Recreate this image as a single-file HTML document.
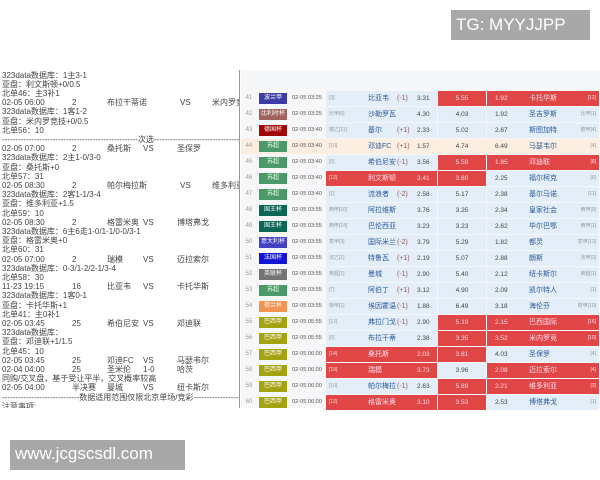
<!DOCTYPE html>
<html><head><meta charset="utf-8"><style>
*{margin:0;padding:0;box-sizing:border-box}
body{width:600px;height:480px;background:#fff;position:relative;overflow:hidden;font-family:"Liberation Sans","Noto Sans CJK SC",sans-serif}
.tg{position:absolute;left:451px;top:10px;width:139px;height:30px;background:#a8a8a8;color:#fff;font-size:17px;line-height:30px;padding-left:5px}
.www{position:absolute;left:10px;top:440px;width:175px;height:30px;background:#a8a8a8;color:#fff;font-size:17px;line-height:28px;padding-left:5px}
.lp{position:absolute;left:0;top:70px;width:240px;height:338px;overflow:hidden;border-right:1px solid #999;font-size:8px;color:#444}
.l{position:absolute;left:2px;white-space:nowrap;height:9px;line-height:9px}
.l span{position:absolute;white-space:nowrap}
.rp{position:absolute;left:241px;top:70px;width:359px;height:338px;background:#f6f7f9}
.r{position:absolute;left:0;height:15px;width:358px;font-size:6.5px;color:#444;line-height:15px}
.r div{position:absolute;top:0;height:15px;white-space:nowrap}
.ix{left:2px;width:12px;text-align:center;color:#999;font-size:6px}
.bd{left:18px!important;top:2px!important;width:28px;height:11px!important;line-height:11px;color:#fff;text-align:center;font-size:6px}
.tm{left:51px;color:#555;font-size:5.6px}
.hc{left:85px;width:111px;background:#e3eef9}
.dc{left:197px;width:48px;background:#e3eef9;text-align:center}
.ac{left:246px;width:112px;background:#e3eef9}
.red{background:#e04646!important;color:#fde!important}
.red *{color:#fde!important}
.hc i,.ac i{position:absolute;font-style:normal;white-space:nowrap}
.rk{color:#999;font-size:5px}
.nm{color:#2a5a9a;font-size:7px}
.hp{color:#955;font-size:7px}
</style></head><body>
<div class="tg">TG: MYYJJPP</div>
<div class="www">www.jcgscsdl.com</div>
<div class="lp">
<div class="l" style="top:1px">323data数据库：1主3-1</div>
<div class="l" style="top:10px">亚盘：利文斯顿+0/0.5</div>
<div class="l" style="top:19px">北单46：主3补1</div>
<div class="l" style="top:28px">02-05 06:00<span style="left:70px">2</span><span style="left:105px">布拉干蒂诺</span><span style="left:178px">VS</span><span style="left:210px">米内罗竞</span></div>
<div class="l" style="top:37px">323data数据库：1客1-2</div>
<div class="l" style="top:47px">亚盘：米内罗竞技+0/0.5</div>
<div class="l" style="top:56px">北单56：10</div>
<div class="l" style="top:65px">---------------------------------------------------次选--------------------------------------------</div>
<div class="l" style="top:74px">02-05 07:00<span style="left:70px">2</span><span style="left:105px">桑托斯</span><span style="left:141px">VS</span><span style="left:175px">圣保罗</span></div>
<div class="l" style="top:83px">323data数据库：2主1-0/3-0</div>
<div class="l" style="top:93px">亚盘：桑托斯+0</div>
<div class="l" style="top:102px">北单57：31</div>
<div class="l" style="top:111px">02-05 08:30<span style="left:70px">2</span><span style="left:105px">帕尔梅拉斯</span><span style="left:178px">VS</span><span style="left:210px">维多利亚</span></div>
<div class="l" style="top:120px">323data数据库：2客1-1/3-4</div>
<div class="l" style="top:129px">亚盘：维多利亚+1.5</div>
<div class="l" style="top:139px">北单59：10</div>
<div class="l" style="top:148px">02-05 08:30<span style="left:70px">2</span><span style="left:105px">格雷米奥</span><span style="left:141px">VS</span><span style="left:175px">博塔弗戈</span></div>
<div class="l" style="top:157px">323data数据库：6主6走1-0/1-1/0-0/3-1</div>
<div class="l" style="top:166px">亚盘：格雷米奥+0</div>
<div class="l" style="top:175px">北单60：31</div>
<div class="l" style="top:185px">02-05 07:00<span style="left:70px">2</span><span style="left:105px">瑞模</span><span style="left:141px">VS</span><span style="left:175px">迈拉索尔</span></div>
<div class="l" style="top:194px">323data数据库：0-3/1-2/2-1/3-4</div>
<div class="l" style="top:203px">北单58：30</div>
<div class="l" style="top:212px">11-23 19:15<span style="left:70px">16</span><span style="left:105px">比亚韦</span><span style="left:141px">VS</span><span style="left:175px">卡托华斯</span></div>
<div class="l" style="top:221px">323data数据库：1客0-1</div>
<div class="l" style="top:231px">亚盘：卡托华斯+1</div>
<div class="l" style="top:240px">北单41：主0补1</div>
<div class="l" style="top:249px">02-05 03:45<span style="left:70px">25</span><span style="left:105px">希伯尼安</span><span style="left:141px">VS</span><span style="left:175px">邓迪联</span></div>
<div class="l" style="top:258px">323data数据库：</div>
<div class="l" style="top:267px">亚盘：邓迪联+1/1.5</div>
<div class="l" style="top:277px">北单45：10</div>
<div class="l" style="top:286px">02-05 03:45<span style="left:70px">25</span><span style="left:105px">邓迪FC</span><span style="left:141px">VS</span><span style="left:175px">马瑟韦尔</span></div>
<div class="l" style="top:295px">02-04 04:00<span style="left:70px">25</span><span style="left:105px">圣米伦</span><span style="left:141px">1-0</span><span style="left:175px">哈茨</span></div>
<div class="l" style="top:304px">同购/交叉盘，基于受让平半，交叉概率较高</div>
<div class="l" style="top:313px">02-05 04:00<span style="left:70px">半决赛</span><span style="left:105px">曼城</span><span style="left:141px">VS</span><span style="left:175px">纽卡斯尔</span></div>
<div class="l" style="top:323px">-----------------------------数据适用范围仅限北京单场/竞彩---------------------------</div>
<div class="l" style="top:332px">注意事项:</div>
</div>
<div class="rp">
<div class="r" style="top:21px"><div class="ix">41</div><div class="bd" style="background:#3c3ca6">波兰甲</div><div class="tm">02-05 03:25</div><div class="hc"><i class="rk" style="left:3px">[3]</i><i class="nm" style="left:42px">比亚韦</i><i class="hp" style="left:71px">(-1)</i><i style="left:91px">3.31</i></div><div class="dc red">5.55</div><div class="ac red"><i style="left:8px">1.92</i><i class="nm" style="left:42px">卡托华斯</i><i class="rk" style="right:3px">[12]</i></div></div>
<div class="r" style="top:37px"><div class="ix">42</div><div class="bd" style="background:#a0625a">比利时杯</div><div class="tm">02-05 03:25</div><div class="hc"><i class="rk" style="left:3px">比甲[6]</i><i class="nm" style="left:42px">沙勒罗瓦</i><i style="left:91px">4.30</i></div><div class="dc">4.03</div><div class="ac"><i style="left:8px">1.92</i><i class="nm" style="left:42px">圣吉罗斯</i><i class="rk" style="right:3px">比甲[1]</i></div></div>
<div class="r" style="top:53px"><div class="ix">43</div><div class="bd" style="background:#a00808">德国杯</div><div class="tm">02-05 03:40</div><div class="hc"><i class="rk" style="left:3px">德乙[11]</i><i class="nm" style="left:42px">基尔</i><i class="hp" style="left:71px">(+1)</i><i style="left:91px">2.33</i></div><div class="dc">5.02</div><div class="ac"><i style="left:8px">2.67</i><i class="nm" style="left:42px">斯图加特</i><i class="rk" style="right:3px">德甲[4]</i></div></div>
<div class="r" style="top:69px;background:#fcefe2"><div class="ix">44</div><div class="bd" style="background:#4a9a68">苏超</div><div class="tm">02-05 03:40</div><div class="hc" style="background:#fcefe2"><i class="rk" style="left:3px">[10]</i><i class="nm" style="left:42px">邓迪FC</i><i class="hp" style="left:71px">(+1)</i><i style="left:91px">1.57</i></div><div class="dc" style="background:#fcefe2">4.74</div><div class="ac" style="background:#fcefe2"><i style="left:8px">6.49</i><i class="nm" style="left:42px">马瑟韦尔</i><i class="rk" style="right:3px">[4]</i></div></div>
<div class="r" style="top:85px"><div class="ix">45</div><div class="bd" style="background:#4a9a68">苏超</div><div class="tm">02-05 03:40</div><div class="hc"><i class="rk" style="left:3px">[5]</i><i class="nm" style="left:42px">希伯尼安</i><i class="hp" style="left:71px">(-1)</i><i style="left:91px">3.56</i></div><div class="dc red">5.58</div><div class="ac red"><i style="left:8px">1.85</i><i class="nm" style="left:42px">邓迪联</i><i class="rk" style="right:3px">[8]</i></div></div>
<div class="r" style="top:101px"><div class="ix">46</div><div class="bd" style="background:#4a9a68">苏超</div><div class="tm">02-05 03:40</div><div class="hc red"><i class="rk" style="left:3px">[12]</i><i class="nm" style="left:42px">利文斯顿</i><i style="left:91px">3.41</i></div><div class="dc red">3.80</div><div class="ac"><i style="left:8px">2.25</i><i class="nm" style="left:42px">福尔柯克</i><i class="rk" style="right:3px">[6]</i></div></div>
<div class="r" style="top:117px"><div class="ix">47</div><div class="bd" style="background:#4a9a68">苏超</div><div class="tm">02-05 03:40</div><div class="hc"><i class="rk" style="left:3px">[1]</i><i class="nm" style="left:42px">流浪者</i><i class="hp" style="left:71px">(-2)</i><i style="left:91px">2.58</i></div><div class="dc">5.17</div><div class="ac"><i style="left:8px">2.38</i><i class="nm" style="left:42px">基尔马诺</i><i class="rk" style="right:3px">[11]</i></div></div>
<div class="r" style="top:133px"><div class="ix">48</div><div class="bd" style="background:#0b6656">国王杯</div><div class="tm">02-05 03:55</div><div class="hc"><i class="rk" style="left:3px">西甲[16]</i><i class="nm" style="left:42px">阿拉维斯</i><i style="left:91px">3.76</i></div><div class="dc">3.25</div><div class="ac"><i style="left:8px">2.34</i><i class="nm" style="left:42px">皇家社会</i><i class="rk" style="right:3px">西甲[9]</i></div></div>
<div class="r" style="top:149px"><div class="ix">49</div><div class="bd" style="background:#0b6656">国王杯</div><div class="tm">02-05 03:55</div><div class="hc"><i class="rk" style="left:3px">西甲[14]</i><i class="nm" style="left:42px">巴伦西亚</i><i style="left:91px">3.23</i></div><div class="dc">3.23</div><div class="ac"><i style="left:8px">2.62</i><i class="nm" style="left:42px">毕尔巴鄂</i><i class="rk" style="right:3px">西甲[1]</i></div></div>
<div class="r" style="top:165px"><div class="ix">50</div><div class="bd" style="background:#4242c2">意大利杯</div><div class="tm">02-05 03:55</div><div class="hc"><i class="rk" style="left:3px">意甲[3]</i><i class="nm" style="left:42px">国际米兰</i><i class="hp" style="left:71px">(-2)</i><i style="left:91px">3.79</i></div><div class="dc">5.29</div><div class="ac"><i style="left:8px">1.82</i><i class="nm" style="left:42px">都灵</i><i class="rk" style="right:3px">意甲[13]</i></div></div>
<div class="r" style="top:181px"><div class="ix">51</div><div class="bd" style="background:#1414d4">法国杯</div><div class="tm">02-05 03:55</div><div class="hc"><i class="rk" style="left:3px">法乙[1]</i><i class="nm" style="left:42px">特鲁瓦</i><i class="hp" style="left:71px">(+1)</i><i style="left:91px">2.19</i></div><div class="dc">5.07</div><div class="ac"><i style="left:8px">2.88</i><i class="nm" style="left:42px">朗斯</i><i class="rk" style="right:3px">法甲[3]</i></div></div>
<div class="r" style="top:197px"><div class="ix">52</div><div class="bd" style="background:#737373">英联杯</div><div class="tm">02-05 03:55</div><div class="hc"><i class="rk" style="left:3px">英超[1]</i><i class="nm" style="left:42px">曼城</i><i class="hp" style="left:71px">(-1)</i><i style="left:91px">2.90</i></div><div class="dc">5.40</div><div class="ac"><i style="left:8px">2.12</i><i class="nm" style="left:42px">纽卡斯尔</i><i class="rk" style="right:3px">英超[1]</i></div></div>
<div class="r" style="top:213px"><div class="ix">53</div><div class="bd" style="background:#4a9a68">苏超</div><div class="tm">02-05 03:55</div><div class="hc"><i class="rk" style="left:3px">[7]</i><i class="nm" style="left:42px">阿伯丁</i><i class="hp" style="left:71px">(+1)</i><i style="left:91px">3.12</i></div><div class="dc">4.90</div><div class="ac"><i style="left:8px">2.09</i><i class="nm" style="left:42px">凯尔特人</i><i class="rk" style="right:3px">[1]</i></div></div>
<div class="r" style="top:229px"><div class="ix">54</div><div class="bd" style="background:#f29452">荷兰杯</div><div class="tm">02-05 03:55</div><div class="hc"><i class="rk" style="left:3px">荷甲[1]</i><i class="nm" style="left:42px">埃因霍温</i><i class="hp" style="left:71px">(-1)</i><i style="left:91px">1.88</i></div><div class="dc">6.49</div><div class="ac"><i style="left:8px">3.18</i><i class="nm" style="left:42px">海伦芬</i><i class="rk" style="right:3px">荷甲[10]</i></div></div>
<div class="r" style="top:245px"><div class="ix">55</div><div class="bd" style="background:#a3a312">巴西甲</div><div class="tm">02-05 05:55</div><div class="hc"><i class="rk" style="left:3px">[12]</i><i class="nm" style="left:42px">弗拉门戈</i><i class="hp" style="left:71px">(-1)</i><i style="left:91px">2.90</i></div><div class="dc red">5.19</div><div class="ac red"><i style="left:8px">2.15</i><i class="nm" style="left:42px">巴西国际</i><i class="rk" style="right:3px">[16]</i></div></div>
<div class="r" style="top:261px"><div class="ix">56</div><div class="bd" style="background:#a3a312">巴西甲</div><div class="tm">02-05 05:55</div><div class="hc"><i class="rk" style="left:3px">[6]</i><i class="nm" style="left:42px">布拉干蒂</i><i style="left:91px">2.38</i></div><div class="dc red">3.35</div><div class="ac red"><i style="left:8px">3.52</i><i class="nm" style="left:42px">米内罗竞</i><i class="rk" style="right:3px">[10]</i></div></div>
<div class="r" style="top:277px"><div class="ix">57</div><div class="bd" style="background:#a3a312">巴西甲</div><div class="tm">02-05 06:00</div><div class="hc red"><i class="rk" style="left:3px">[14]</i><i class="nm" style="left:42px">桑托斯</i><i style="left:91px">2.03</i></div><div class="dc red">3.81</div><div class="ac"><i style="left:8px">4.03</i><i class="nm" style="left:42px">圣保罗</i><i class="rk" style="right:3px">[4]</i></div></div>
<div class="r" style="top:293px"><div class="ix">58</div><div class="bd" style="background:#a3a312">巴西甲</div><div class="tm">02-05 06:00</div><div class="hc red"><i class="rk" style="left:3px">[19]</i><i class="nm" style="left:42px">瑞模</i><i style="left:91px">3.73</i></div><div class="dc">3.96</div><div class="ac red"><i style="left:8px">2.08</i><i class="nm" style="left:42px">迈拉索尔</i><i class="rk" style="right:3px">[4]</i></div></div>
<div class="r" style="top:309px"><div class="ix">59</div><div class="bd" style="background:#a3a312">巴西甲</div><div class="tm">02-05 06:00</div><div class="hc"><i class="rk" style="left:3px">[10]</i><i class="nm" style="left:42px">帕尔梅拉</i><i class="hp" style="left:71px">(-1)</i><i style="left:91px">2.63</i></div><div class="dc red">5.89</div><div class="ac red"><i style="left:8px">2.21</i><i class="nm" style="left:42px">维多利亚</i><i class="rk" style="right:3px">[3]</i></div></div>
<div class="r" style="top:325px"><div class="ix">60</div><div class="bd" style="background:#a3a312">巴西甲</div><div class="tm">02-05 06:00</div><div class="hc red"><i class="rk" style="left:3px">[12]</i><i class="nm" style="left:42px">格雷米奥</i><i style="left:91px">3.10</i></div><div class="dc red">3.53</div><div class="ac"><i style="left:8px">2.53</i><i class="nm" style="left:42px">博塔弗戈</i><i class="rk" style="right:3px">[1]</i></div></div>
</div>
</body></html>
